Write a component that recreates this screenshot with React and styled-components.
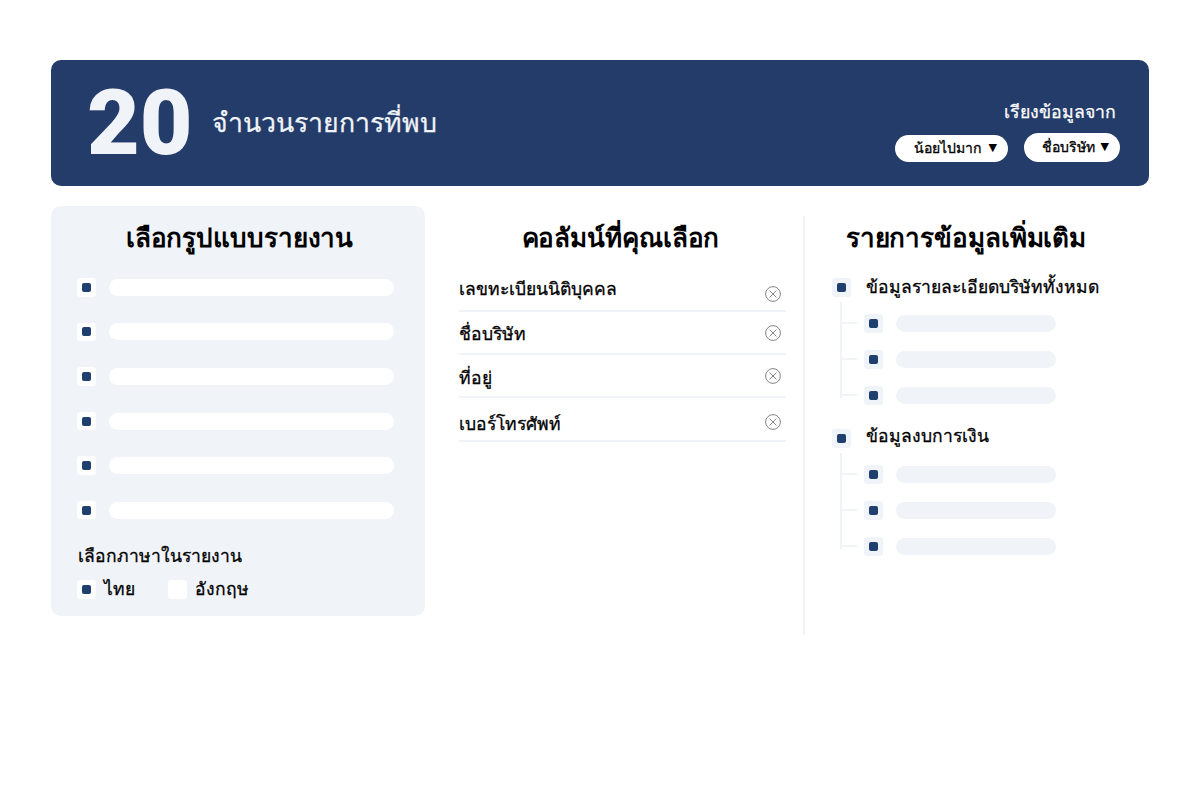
import React from "react";
import styled, { createGlobalStyle } from "styled-components";

const Global = createGlobalStyle`
  html, body { margin: 0; padding: 0; background: #fff; }
  body { font-family: Inter, "Noto Sans", "DejaVu Sans", sans-serif; color: #000; }
`;
const Page = styled.div`
  width: 1200px; height: 800px; box-sizing: border-box; padding: 60px 51px 0 51px;
  display: flex; flex-direction: column;
`;
const Banner = styled.header`
  height: 126px; border-radius: 10px; background: #243c6a; box-sizing: border-box;
  padding: 0 29px 0 36px; display: flex; align-items: center; justify-content: space-between;
`;
const Summary = styled.div`display: flex; align-items: center; gap: 19px;`;
const Count = styled.div`
  font-family: Roboto, sans-serif; font-size: 91px; font-weight: 900; line-height: 126px; color: #f0f3f8;
`;
const CountLabel = styled.div`
  font-size: 26.7px; font-weight: 400; -webkit-text-stroke: 0.25px #f0f3f8; color: #f0f3f8; line-height: 34px; margin-top: -2px;
`;
const Sort = styled.div`display: flex; flex-direction: column; align-items: flex-end; margin-top: 15px;`;
const SortLabel = styled.div`
  font-size: 17.7px; font-weight: 400; -webkit-text-stroke: 0.25px #fff; color: #fff; line-height: 24px; margin: 0 4px 9px 0;
`;
const Pills = styled.div`display: flex; align-items: flex-end; gap: 16px;`;
const Pill = styled.div`
  width: ${p => p.$w}px; height: ${p => p.$h}px; border-radius: 15px; background: #fff; box-sizing: border-box;
  display: flex; align-items: center; justify-content: flex-end; gap: ${p => p.$gap}px; padding-right: ${p => p.$pr}px;
  font-size: 14px; font-weight: 400; -webkit-text-stroke: 0.3px #000; line-height: 20px;
`;
const Caret = styled.span`font-family: "DejaVu Sans", sans-serif; font-size: 11px; -webkit-text-stroke: 0;`;
const Columns = styled.div`display: grid; grid-template-columns: 374px 378px 1fr; margin-top: 20px;`;
const LeftPanel = styled.section`
  height: 410px; box-sizing: border-box; background: #f0f3f8; border-radius: 10px; padding: 14px 26px 0;
`;
const Title = styled.h2`
  margin: 0; text-align: center; font-size: 26px; letter-spacing: -0.1px; font-weight: 700; line-height: 36px;
`;
const PanelTitle = styled(Title)`padding-left: 3px;`;
const OptionList = styled.div`display: flex; flex-direction: column; gap: 26.1px; margin-top: 22px;`;
const OptionRow = styled.div`display: flex; align-items: center; gap: 13px;`;
const Check = styled.span`
  width: 18.5px; height: 18.5px; flex: none; border-radius: 3px; display: flex; align-items: center; justify-content: center;
  background: ${p => (p.$tint ? "#f0f3f8" : "#fff")};
  &::after {
    content: ""; display: ${p => (p.$off ? "none" : "block")};
    width: 9px; height: 9px; border-radius: 2px; background: #1f3f6e;
  }
`;
const Bar = styled.span`
  display: block; width: ${p => p.$w}px; height: 17px; border-radius: 9px;
  background: ${p => (p.$tint ? "#f0f3f8" : "#fff")};
`;
const BodyText = `font-size: 17.5px; font-weight: 400; -webkit-text-stroke: 0.28px #000; line-height: 26px;`;
const LangTitle = styled.div`${BodyText} margin-top: 24px; padding-left: 1px;`;
const LangRow = styled.div`display: flex; align-items: center; margin-top: 7px;`;
const Lang = styled.label`${BodyText} display: flex; align-items: center; gap: 8.5px; margin-right: 33px;`;
const Middle = styled.section`padding: 14px 17px 0 34px;`;
const MiddleTitle = styled(Title)`padding-right: 4px;`;
const Rows = styled.div`margin-top: 12px;`;
const Row = styled.div`
  height: ${p => p.$h}px; box-sizing: border-box; border-bottom: 2px solid #f0f3f8;
  display: flex; justify-content: space-between; align-items: flex-end;
`;
const RowText = styled.span`${BodyText} margin-bottom: ${p => p.$mb}px;`;
const Remove = styled.svg`width: 16px; height: 16px; margin: 0 5px ${p => p.$mb}px 0; flex: none;`;
const Right = styled.section`
  height: 419px; margin-top: 10px; border-left: 2px solid #f0f3f8; box-sizing: border-box; padding: 4px 0 0 27px;
`;
const RightTitle = styled(Title)`width: 268px;`;
const GroupList = styled.div`margin-top: 22px;`;
const Group = styled.div`margin-top: ${p => p.$mt}px;`;
const GroupHead = styled.div`display: flex; align-items: center; gap: 15px; height: 18.5px;`;
const GroupLabel = styled.span`${BodyText} margin-bottom: ${p => p.$mb}px;`;
const Tree = styled.div`
  position: relative; margin: 5px 0 0 8px; padding: 12.5px 0 0 24px; display: flex; flex-direction: column; gap: 17.5px;
  &::before { content: ""; position: absolute; left: 0; top: 0; bottom: 7px; width: 2px; background: #f0f3f8; }
`;
const TreeRow = styled.div`
  position: relative; display: flex; align-items: center; gap: 13.5px;
  &::before { content: ""; position: absolute; left: -24px; top: 50%; margin-top: -1px; width: 17px; height: 2px; background: #f0f3f8; }
`;

const RemoveIcon = ({ mb }) => (
  <Remove $mb={mb} viewBox="0 0 16 16" fill="none" stroke="#777" strokeWidth="0.9">
    <circle cx="8" cy="8" r="7.4" />
    <path d="M4.6 4.6l6.8 6.8M11.4 4.6l-6.8 6.8" />
  </Remove>
);
const rows = [
  ["เลขทะเบียนนิติบุคคล", 44, 8, 8],
  ["ชื่อบริษัท", 43, 6, 12],
  ["ที่อยู่", 43, 5, 12],
  ["เบอร์โทรศัพท์", 44, 3, 10],
];
const GroupBlock = ({ title, mt, lift }) => (
  <Group $mt={mt}>
    <GroupHead><Check $tint /><GroupLabel $mb={lift}>{title}</GroupLabel></GroupHead>
    <Tree>
      {[0, 1, 2].map(i => (
        <TreeRow key={i}><Check $tint /><Bar $tint $w={160} /></TreeRow>
      ))}
    </Tree>
  </Group>
);

export default function App() {
  return (
    <Page>
      <Global />
      <Banner>
        <Summary>
          <Count>20</Count>
          <CountLabel>จำนวนรายการที่พบ</CountLabel>
        </Summary>
        <Sort>
          <SortLabel>เรียงข้อมูลจาก</SortLabel>
          <Pills>
            <Pill $w={113} $h={27} $gap={8} $pr={11}>น้อยไปมาก <Caret>▼</Caret></Pill>
            <Pill $w={96} $h={29} $gap={6} $pr={11}>ชื่อบริษัท <Caret>▼</Caret></Pill>
          </Pills>
        </Sort>
      </Banner>
      <Columns>
        <LeftPanel>
          <PanelTitle>เลือกรูปแบบรายงาน</PanelTitle>
          <OptionList>
            {[0, 1, 2, 3, 4, 5].map(i => (
              <OptionRow key={i}><Check /><Bar $w={285} /></OptionRow>
            ))}
          </OptionList>
          <LangTitle>เลือกภาษาในรายงาน</LangTitle>
          <LangRow>
            <Lang><Check />ไทย</Lang>
            <Lang><Check $off />อังกฤษ</Lang>
          </LangRow>
        </LeftPanel>
        <Middle>
          <MiddleTitle>คอลัมน์ที่คุณเลือก</MiddleTitle>
          <Rows>
            {rows.map(([t, h, tm, im]) => (
              <Row key={t} $h={h}><RowText $mb={tm}>{t}</RowText><RemoveIcon mb={im} /></Row>
            ))}
          </Rows>
        </Middle>
        <Right>
          <RightTitle>รายการข้อมูลเพิ่มเติม</RightTitle>
          <GroupList>
            <GroupBlock title="ข้อมูลรายละเอียดบริษัททั้งหมด" mt={0} lift={0} />
            <GroupBlock title="ข้อมูลงบการเงิน" mt={24.5} lift={4} />
          </GroupList>
        </Right>
      </Columns>
    </Page>
  );
}
